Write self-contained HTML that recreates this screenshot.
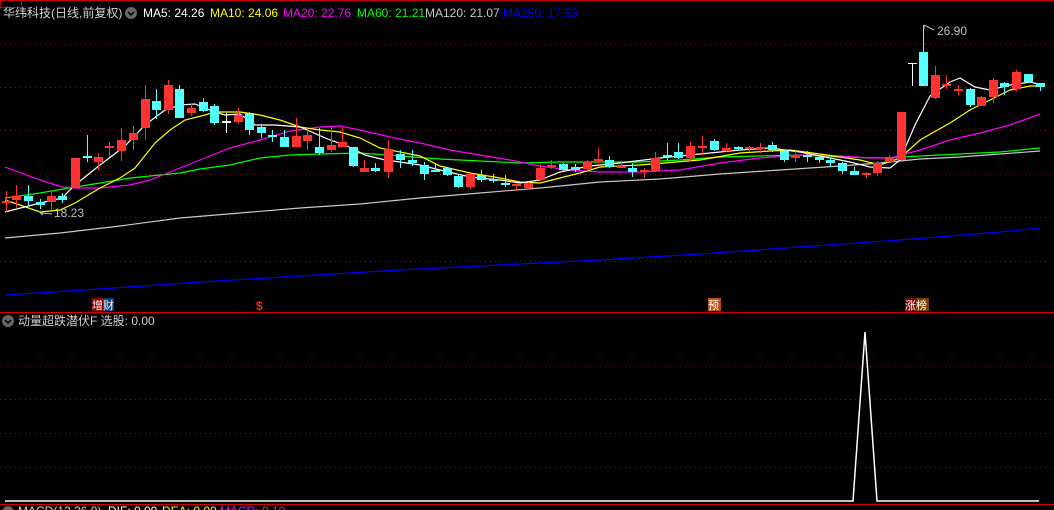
<!DOCTYPE html>
<html><head><meta charset="utf-8"><style>
html,body{margin:0;padding:0;background:#000;width:1054px;height:510px;overflow:hidden}
svg{display:block}
text{font-family:"Liberation Sans","Noto Sans CJK SC",sans-serif;font-size:12px}
</style></head><body>
<svg id="s" width="1054" height="510" xmlns="http://www.w3.org/2000/svg">
<rect width="1054" height="510" fill="#000"/>
<line x1="0" y1="0.5" x2="1054" y2="0.5" stroke="#c00000"/>
<rect x="0.5" y="0.5" width="21" height="7" fill="none" stroke="#c00000"/>
<g stroke="#8a1010" stroke-dasharray="1,4">
<line x1="0" y1="44.5" x2="1054" y2="44.5"/><line x1="0" y1="87.5" x2="1054" y2="87.5"/>
<line x1="0" y1="130.5" x2="1054" y2="130.5"/><line x1="0" y1="174.5" x2="1054" y2="174.5"/>
<line x1="0" y1="217.5" x2="1054" y2="217.5"/><line x1="0" y1="261.5" x2="1054" y2="261.5"/>
<line x1="0" y1="366.5" x2="1054" y2="366.5"/><line x1="0" y1="399.5" x2="1054" y2="399.5"/>
<line x1="0" y1="433.5" x2="1054" y2="433.5"/><line x1="0" y1="467.5" x2="1054" y2="467.5"/>
</g>
<line x1="0" y1="312.5" x2="1054" y2="312.5" stroke="#d00000"/>
<line x1="0" y1="504.5" x2="1054" y2="504.5" stroke="#d00000"/>
<g id="ma" fill="none" stroke-width="1.2"></g>
<g id="cd"></g>
<text x="3" y="17" fill="#d0d0d0">华纬科技(日线,前复权)</text>
<circle cx="131" cy="13" r="6" fill="#666"/><path d="M128 12l3 3 3-3" stroke="#000" stroke-width="1.5" fill="none"/>
<text x="143" y="17" fill="#fff">MA5: 24.26</text>
<text x="210" y="17" fill="#ffff00">MA10: 24.06</text>
<text x="283" y="17" fill="#ff00ff">MA20: 22.76</text>
<text x="357" y="17" fill="#00ff00">MA60: 21.21</text>
<text x="425" y="17" fill="#c8c8c8">MA120: 21.07</text>
<text x="503" y="17" fill="#0000ff">MA250: 17.53</text>
<text x="54" y="217" fill="#c0c0c0">18.23</text>
<path d="M40 213l12 1M40 213l3-2M40 213l3 2" stroke="#c0c0c0" fill="none"/>
<text x="937" y="35" fill="#c0c0c0">26.90</text>
<path d="M924 25l10 5M924 25v4" stroke="#c0c0c0" fill="none"/>
<rect x="92" y="298" width="11" height="13" fill="#8b0000"/><rect x="103" y="298" width="11" height="13" fill="#0a3a78"/>
<text x="92" y="309" fill="#fff" style="font-size:11px">增财</text>
<text x="256" y="310" fill="#ff2020" style="font-size:12px;font-weight:bold">$</text>
<rect x="708" y="298" width="13" height="13" fill="#c05010"/><text x="708" y="309" fill="#fff" style="font-size:11px">预</text>
<rect x="905" y="298" width="11" height="13" fill="#7a0000"/><rect x="916" y="298" width="13" height="13" fill="#7a4000"/>
<text x="905" y="309" fill="#fff" style="font-size:11px">涨榜</text>
<circle cx="8" cy="321" r="6" fill="#666"/><path d="M5 320l3 3 3-3" stroke="#000" stroke-width="1.5" fill="none"/>
<text x="18" y="325" fill="#d0d0d0">动量超跌潜伏F  选股: 0.00</text>
<polyline points="5,501 853,501 865,332 877,501 1039,501" fill="none" stroke="#fff" stroke-width="1.5"/>
<circle cx="8" cy="512" r="6" fill="#666"/>
<text x="18" y="515" fill="#d0d0d0">MACD(12,26,9)</text><text x="108" y="515" fill="#fff">DIF: 0.00</text>
<text x="162" y="515" fill="#ff0">DEA: 0.00</text><text x="220" y="515" fill="#f0f">MACD: 0.10</text>
</svg>
<script>
var NS="http://www.w3.org/2000/svg";
function poly(p,c){var e=document.createElementNS(NS,"polyline");e.setAttribute("points",p);e.setAttribute("stroke",c);document.getElementById("ma").appendChild(e);}
poly("5,295 100,289 200,282 300,276 400,270 500,265 600,260 700,254 800,247 900,240 1000,232 1040,228","#0000ff");
poly("5,238 60,233 120,226 180,218 240,213 300,208 360,204 420,198 480,193 540,188 600,182 660,179 720,174 780,170 840,166 880,163 920,159 960,157 1000,154 1040,151","#c8c8c8");
poly("5,198 40,193 75,187 100,183 130,178 160,175 180,173 200,169 230,165 260,158 290,155 320,154 360,153 400,156 440,159 480,161 520,163 560,162 600,162 640,162 680,160 720,157 760,156 800,155 840,157 880,158 920,156 960,154 1000,152 1040,148","#00ff00");
poly("5,167 40,180 62,187 75,188 100,188 130,185 150,180 170,172 200,160 230,148 260,140 290,131 320,127 340,126 360,130 390,137 420,143 450,150 480,155 510,160 540,166 570,170 600,172 640,172 680,170 720,163 760,158 800,155 840,156 870,158 890,158 920,150 950,140 980,133 1010,125 1040,114","#ff00ff");
poly("5,200 20,205 40,212 60,210 75,203 100,188 120,178 135,168 155,143 170,130 185,120 205,115 215,112 240,112 260,115 280,120 300,127 320,130 340,132 360,138 380,148 400,152 420,156 440,166 470,173 500,178 520,182 540,183 560,178 580,173 600,167 640,165 700,160 740,153 770,151 790,150 820,154 860,160 880,165 900,158 920,140 950,123 970,110 990,100 1010,90 1030,86 1042,86","#ffff00");
poly("5,212 40,203 62,198 75,185 100,165 125,146 145,125 165,110 180,105 195,104 215,112 225,115 240,114 255,125 275,125 300,127 330,140 345,145 365,155 385,160 400,162 420,165 440,170 470,177 500,180 520,183 540,180 560,172 590,166 620,163 660,158 700,154 740,150 770,148 800,152 830,158 850,162 870,167 890,168 900,160 915,125 930,96 950,82 960,78 975,87 990,90 1010,85 1030,82 1042,85","#ffffff");
var C={r:"#ff3232",c:"#54ffff",w:"#ffffff"};
var d=[[5.5,201,203,191,212,"r"],[16,196,200,185,208,"r"],[28,196,201,185,205,"c"],[40,202,205,199,209,"c"],[51,196,202,190,210,"r"],[62,196,200,193,203,"c"],[75,158,188,158,188,"r"],[87,156,158,135,162,"c"],[98,157,162,153,170,"r"],[109,146,148,142,157,"r"],[121,140,151,128,161,"r"],[133,133,140,126,150,"r"],[145,99,128,85,140,"r"],[156,101,110,89,119,"c"],[168,85,110,80,114,"r"],[179,89,118,85,118,"c"],[191,108,113,104,116,"r"],[203,102,111,98,112,"c"],[214,106,123,104,125,"c"],[226,121,123,113,133,"w"],[238,115,122,108,124,"r"],[249,113,130,112,135,"c"],[261,127,133,124,138,"c"],[272,135,137,130,142,"c"],[284,137,147,130,147,"c"],[296,136,147,118,147,"r"],[307,135,141,130,150,"r"],[319,147,153,128,155,"c"],[331,145,150,127,152,"r"],[342,142,147,127,147,"r"],[353,147,166,147,167,"c"],[364,168,172,160,172,"r"],[375,168,171,163,172,"c"],[388,149,172,140,178,"r"],[400,154,160,150,168,"c"],[412,160,163,150,166,"c"],[424,165,174,162,180,"c"],[435,170,172,163,172,"c"],[447,168,175,168,176,"c"],[458,176,187,175,188,"c"],[470,174,187,172,189,"r"],[481,175,180,170,182,"c"],[493,179,181,174,183,"c"],[505,183,185,175,187,"c"],[516,184,186,183,191,"r"],[528,183,188,182,189,"r"],[540,168,180,164,181,"r"],[551,165,167,160,169,"r"],[563,164,170,163,171,"c"],[575,167,170,164,172,"c"],[587,162,169,160,171,"r"],[598,159,161,148,165,"r"],[609,160,167,156,168,"c"],[621,166,168,162,168,"r"],[632,168,172,163,177,"c"],[644,170,172,168,178,"r"],[655,158,171,152,172,"r"],[667,155,157,143,160,"c"],[678,152,158,143,159,"c"],[690,146,158,142,162,"r"],[702,146,148,136,155,"r"],[714,141,150,139,151,"c"],[726,148,151,143,152,"r"],[738,147,149,146,150,"c"],[749,147,149,146,152,"r"],[760,147,149,143,153,"r"],[772,145,150,142,152,"c"],[784,151,160,150,162,"c"],[795,156,158,151,162,"r"],[807,155,157,151,162,"c"],[819,157,160,156,163,"c"],[830,160,163,158,167,"c"],[842,163,171,162,174,"c"],[854,171,175,167,175,"c"],[866,173,175,172,178,"r"],[877,163,173,161,176,"r"],[889,157,162,155,162,"r"],[901,112,160,112,160,"r"],[923,52,86,25,86,"c"],[935,75,98,66,99,"r"],[946,84,86,75,89,"r"],[958,89,91,85,95,"r"],[970,89,105,88,107,"c"],[981,97,106,96,106,"r"],[993,80,97,78,103,"r"],[1004,83,87,82,95,"c"],[1016,72,89,70,91,"r"],[1028,74,82,74,83,"c"],[1040,83,87,83,91,"c"]];
var g=document.getElementById("cd"),h="";
d.forEach(function(k){var c=C[k[5]],x=Math.round(k[0]);h+='<line x1="'+(x+.5)+'" y1="'+k[3]+'" x2="'+(x+.5)+'" y2="'+k[4]+'" stroke="'+c+'"/>';h+='<rect x="'+(x-4)+'" y="'+k[1]+'" width="9" height="'+Math.max(1,k[2]-k[1])+'" fill="'+c+'"/>';});
h+='<line x1="912.5" y1="63" x2="912.5" y2="86" stroke="#fff"/><line x1="908" y1="63.5" x2="917" y2="63.5" stroke="#fff"/>';
g.innerHTML=h;
</script>
</body></html>
